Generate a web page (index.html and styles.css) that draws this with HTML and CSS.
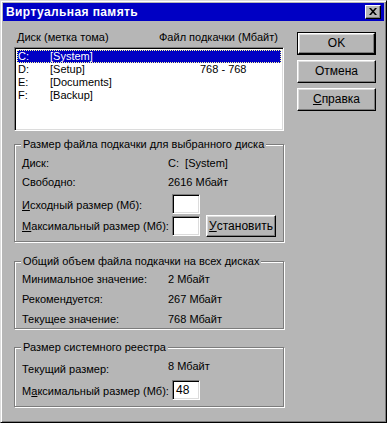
FILE: index.html
```html
<!DOCTYPE html>
<html lang="ru">
<head>
<meta charset="utf-8">
<title>Виртуальная память</title>
<link rel="stylesheet" href="styles.css">
</head>
<body>
<div class="window">
  <div class="titlebar">
    <span class="title">Виртуальная память</span>
    <span class="close">
      <svg width="8" height="7" viewBox="0 0 8 7"><path d="M0 0h2l2 2.3L6 0h2L5 3.5 8 7H6L4 4.7 2 7H0l3-3.5z" fill="#000"/></svg>
    </span>
  </div>
  <div class="body">
    <div class="left">
      <div class="colheads">
        <span class="ch1"><u>Д</u>иск (метка тома)</span>
        <span class="ch2">Файл подкачки (Мбайт)</span>
      </div>
      <div class="listbox">
        <div class="item sel"><span class="drv">C:</span><span class="vol">[System]</span><span class="sz"></span></div>
        <div class="item"><span class="drv">D:</span><span class="vol">[Setup]</span><span class="sz">768 - 768</span></div>
        <div class="item"><span class="drv">E:</span><span class="vol">[Documents]</span><span class="sz"></span></div>
        <div class="item"><span class="drv">F:</span><span class="vol">[Backup]</span><span class="sz"></span></div>
      </div>

      <div class="group g1">
        <span class="legend">Размер файла подкачки для выбранного диска</span>
        <div class="row r1"><span class="lab">Диск:</span><span class="val">C:&nbsp;&nbsp;[System]</span></div>
        <div class="row r2"><span class="lab">Свободно:</span><span class="val">2616 Мбайт</span></div>
        <div class="row r3"><span class="lab wide"><u>И</u>сходный размер (Мб):</span><span class="field"></span></div>
        <div class="row r4"><span class="lab wide"><u>М</u>аксимальный размер (Мб):</span><span class="field"></span><span class="btn set"><u>У</u>становить</span></div>
      </div>

      <div class="group g2">
        <span class="legend">Общий объем файла подкачки на всех дисках</span>
        <div class="row q"><span class="lab">Минимальное значение:</span><span class="val">2 Мбайт</span></div>
        <div class="row q"><span class="lab">Рекомендуется:</span><span class="val">267 Мбайт</span></div>
        <div class="row q last"><span class="lab">Текущее значение:</span><span class="val">768 Мбайт</span></div>
      </div>

      <div class="group g3">
        <span class="legend">Размер системного реестра</span>
        <div class="row s1"><span class="lab">Текущий размер:</span><span class="val up">8 Мбайт</span></div>
        <div class="row s2"><span class="lab wide">М<u>а</u>ксимальный размер (Мб):</span><span class="field">48</span></div>
      </div>
    </div>
    <div class="buttons">
      <div class="defbtn"><span class="btn">OK</span></div>
      <span class="btn">Отмена</span>
      <span class="btn"><u>С</u>правка</span>
    </div>
  </div>
</div>
</body>
</html>
```
FILE: styles.css
```css
html, body {
  margin: 0;
  padding: 0;
  background: #b6b6b6;
}
body {
  font-family: "Liberation Sans", Arial, sans-serif;
  font-size: 11px;
  line-height: 13px;
  color: #000;
}
u { text-decoration: underline; text-underline-offset: 1px; }

.window {
  width: 387px;
  height: 423px;
  box-sizing: border-box;
  background: #b6b6b6;
  border: 1px solid;
  border-color: #dcdcdc #000 #000 #dcdcdc;
  box-shadow: inset 1px 1px #fff, inset -1px -1px #7c7c7c;
  padding: 2px;
  display: flex;
  flex-direction: column;
}

.titlebar {
  height: 18px;
  background: #0000c4;
  display: flex;
  align-items: center;
  justify-content: space-between;
  padding: 0 3px 0 3px;
}
.title {
  color: #fff;
  font-weight: bold;
  font-size: 12px;
  letter-spacing: 0.4px;
}
.close {
  width: 16px;
  height: 14px;
  box-sizing: border-box;
  background: #b6b6b6;
  border: 1px solid;
  border-color: #fff #000 #000 #fff;
  box-shadow: inset -1px -1px #7c7c7c;
  display: flex;
  align-items: center;
  justify-content: center;
}
.close svg { display: block; margin: 0 1px 1px 0; }

.body {
  display: flex;
  padding: 10px 8px 0 11px;
}

.left {
  width: 270px;
  display: flex;
  flex-direction: column;
}

.colheads {
  display: flex;
  height: 13px;
  padding-left: 3px;
}
.ch1 { width: 142px; }

.listbox {
  margin-top: 3px;
  height: 84px;
  box-sizing: border-box;
  background: #fff;
  border: 1px solid;
  border-color: #7c7c7c #fff #fff #7c7c7c;
  box-shadow: inset 1px 1px #000, inset -1px -1px #dcdcdc;
  padding: 2px 2px;
}
.item {
  display: flex;
  height: 13px;
  padding-left: 1px;
}
.item.sel {
  background: #0000c4;
  color: #fff;
  outline: 1px dotted #ffff9c;
  outline-offset: -1px;
}
.drv { width: 32px; }
.vol { width: 150px; }

.group {
  position: relative;
  box-sizing: border-box;
  border: 1px solid #7c7c7c;
  box-shadow: inset 1px 1px #fff, 1px 1px #fff;
  padding-left: 7px;
}
.legend {
  position: absolute;
  top: -7px;
  left: 6px;
  padding: 0 2px;
  background: #b6b6b6;
  white-space: nowrap;
}
.g1 { margin-top: 13px; height: 98px; padding-top: 12px; }
.g2 { margin-top: 19px; height: 68px; padding-top: 11px; }
.g3 { margin-top: 18px; height: 60px; padding-top: 15px; }

.row {
  display: flex;
  align-items: center;
}
.lab { width: 146px; flex: none; }
.lab.wide { width: 150px; }
.val.up { position: relative; top: -3px; }

.r1 { height: 19px; align-items: flex-start; }
.r2 { height: 18px; align-items: flex-start; }
.r3 { height: 20px; }
.r3 .lab { padding-top: 3px; }
.r4 { height: 22px; margin-top: 1px; }
.r4 .lab { padding-top: 1px; }

.q { height: 20px; align-items: flex-start; }
.q.last { height: 13px; }

.s1 { height: 17px; align-items: flex-start; }
.s2 { height: 20px; }
.s2 .lab { padding-top: 2px; }

.field {
  width: 28px;
  height: 20px;
  box-sizing: border-box;
  background: #fff;
  border: 1px solid;
  border-color: #7c7c7c #fff #fff #7c7c7c;
  box-shadow: inset 1px 1px #000, inset -1px -1px #dcdcdc;
  padding: 3px 0 0 3px;
  font-size: 12px;
}

.btn {
  display: flex;
  align-items: center;
  justify-content: center;
  box-sizing: border-box;
  background: #b6b6b6;
  border: 1px solid;
  border-color: #fff #000 #000 #fff;
  box-shadow: inset -1px -1px #7c7c7c, inset 1px 1px #dcdcdc;
  font-size: 12px;
}
.btn.set {
  width: 70px;
  height: 22px;
  margin-left: 6px;
}

.buttons {
  width: 79px;
  margin-left: 13px;
  padding-top: 1px;
  display: flex;
  flex-direction: column;
  gap: 5px;
}
.buttons .btn { height: 23px; }
.defbtn {
  border: 1px solid #000;
  height: 23px;
  box-sizing: border-box;
}
.defbtn .btn { height: 21px; }
```
